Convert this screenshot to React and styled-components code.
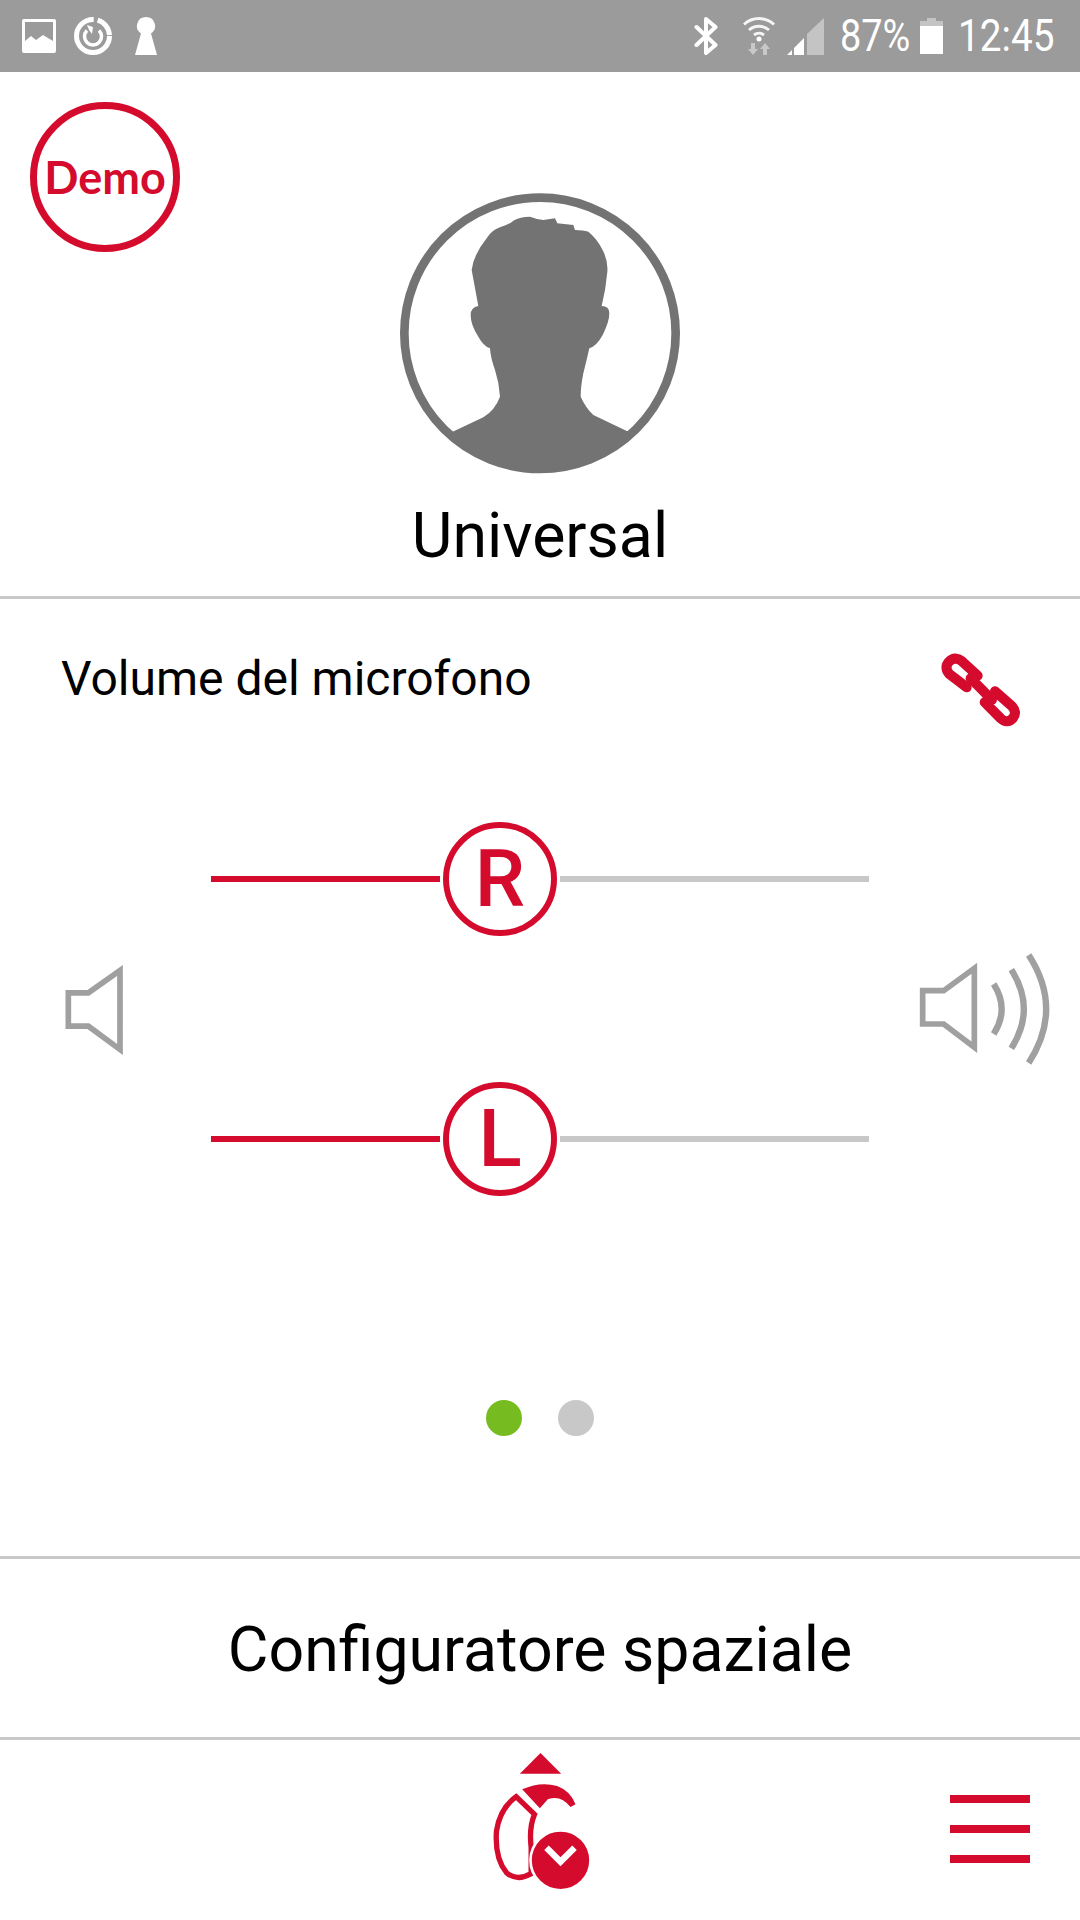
import React from 'react';
import styled, { createGlobalStyle } from 'styled-components';

const RED = '#d50b2d';
const LINE = '#c8c8c8';
const ICON_GREY = '#a0a0a0';

const GlobalStyle = createGlobalStyle`
  html, body {
    margin: 0;
    padding: 0;
    background: #fff;
  }
  body {
    font-family: Roboto, "Liberation Sans", sans-serif;
  }
`;

const Page = styled.div`
  width: 1080px;
  height: 1920px;
  display: flex;
  flex-direction: column;
  background: #fff;
  color: #000;
  overflow: hidden;
`;

const StatusBar = styled.div`
  height: 72px;
  flex: none;
  display: flex;
  align-items: center;
  justify-content: space-between;
  padding: 0 26px 0 22px;
  background: #9b9b9b;
  color: #fff;
`;

const StatusGroup = styled.div`
  display: flex;
  align-items: center;
`;

const StatusIcon = styled.svg`
  display: block;
  flex: none;
  margin-left: ${(p) => p.$gap || 0}px;
`;

const StatusText = styled.span`
  display: inline-block;
  width: ${(p) => p.$width}px;
  margin-left: ${(p) => p.$gap}px;
  font-size: 44px;
  font-weight: 400;
  line-height: 72px;
  white-space: nowrap;
  transform: scaleX(${(p) => p.$squeeze});
  transform-origin: left center;
`;

const Header = styled.header`
  height: 527px;
  flex: none;
  box-sizing: border-box;
  display: grid;
  grid-template-columns: 1fr 290px 1fr;
  padding-top: 30px;
  border-bottom: 3px solid ${LINE};
`;

const DemoBadge = styled.div`
  width: 150px;
  height: 150px;
  box-sizing: border-box;
  margin-left: 30px;
  display: flex;
  align-items: center;
  justify-content: center;
  border: 7px solid ${RED};
  border-radius: 50%;
  color: ${RED};
  font-family: Lato, sans-serif;
  font-size: 45px;
  font-weight: 700;
`;

const Profile = styled.div`
  display: flex;
  flex-direction: column;
  align-items: center;
  padding-top: 86px;
`;

const Avatar = styled.svg`
  display: block;
  flex: none;
`;

const ProfileName = styled.div`
  margin-top: 22px;
  font-size: 62.6px;
  line-height: 72px;
  white-space: nowrap;
`;

const VolumePanel = styled.section`
  flex: 1;
  display: flex;
  flex-direction: column;
`;

const PanelHead = styled.div`
  display: flex;
  align-items: center;
  justify-content: space-between;
  padding: 50px 60px 0 61px;
  height: 80px;
`;

const PanelTitle = styled.h2`
  margin: 0 0 20px;
  font-size: 48px;
  font-weight: 400;
  line-height: 60px;
`;

const SliderArea = styled.div`
  display: grid;
  grid-template-columns: 211px 658px 211px;
  align-items: center;
  margin-top: 93px;
`;

const VolumeIcon = styled.svg`
  display: block;
  margin-left: ${(p) => p.$left}px;
`;

const Sliders = styled.div`
  display: flex;
  flex-direction: column;
  gap: 146px;
`;

const SliderRow = styled.div`
  display: flex;
  align-items: center;
  gap: 3px;
  height: 114px;
`;

const SliderLine = styled.div`
  height: 6px;
  flex: ${(p) => (p.$active ? `0 0 ${p.$size}px` : 1)};
  background: ${(p) => (p.$active ? RED : LINE)};
`;

const Thumb = styled.div`
  width: 114px;
  height: 114px;
  flex: none;
  box-sizing: border-box;
  display: flex;
  align-items: center;
  justify-content: center;
  border: 6px solid ${RED};
  border-radius: 50%;
  color: ${RED};
  font-family: Roboto, sans-serif;
  font-size: 80px;
  font-weight: 500;
`;

const Pager = styled.div`
  display: flex;
  justify-content: center;
  gap: 36px;
  margin-top: 204px;
`;

const PagerDot = styled.span`
  width: 36px;
  height: 36px;
  border-radius: 50%;
  background: ${(p) => (p.$active ? '#76bc21' : LINE)};
`;

const ConfigRow = styled.div`
  height: 184px;
  flex: none;
  box-sizing: border-box;
  display: flex;
  align-items: center;
  justify-content: center;
  padding-top: 2px;
  border-top: 3px solid ${LINE};
  border-bottom: 3px solid ${LINE};
  font-size: 62.6px;
`;

const BottomBar = styled.nav`
  height: 180px;
  flex: none;
  display: grid;
  grid-template-columns: 1fr 107px 1fr;
`;

const HearingIcon = styled.svg`
  display: block;
  grid-column: 2;
  margin-top: 11px;
`;

const MenuButton = styled.div`
  justify-self: end;
  width: 80px;
  margin: 55px 50px 0 0;
  display: flex;
  flex-direction: column;
  gap: 22px;
`;

const MenuBar = styled.span`
  display: block;
  height: 8px;
  background: ${RED};
`;

const ImageIcon = () => (
  <StatusIcon width="34" height="34" viewBox="0 0 34 34">
    <path fill="#fff" fillRule="evenodd" d="M2 0h30a2 2 0 0 1 2 2v30a2 2 0 0 1-2 2H2a2 2 0 0 1-2-2V2a2 2 0 0 1 2-2zM3 3v19l6-5 5 4 7-5 10 6V3z" />
  </StatusIcon>
);

const SyncIcon = () => (
  <StatusIcon $gap={18} width="38" height="38" viewBox="0 0 38 38" fill="none" stroke="#fff">
    <circle cx="19" cy="19" r="16.500" strokeWidth="5" strokeDasharray="78 4 20 2" />
    <path strokeWidth="3.500" d="M13 13.500a8.500 8.500 0 1 0 12 0" />
    <path fill="#fff" stroke="none" d="M13 8l6 2-1 7-3-4z" />
  </StatusIcon>
);

const KeyholeIcon = () => (
  <StatusIcon $gap={23} width="22" height="38" viewBox="0 0 22 38">
    <path fill="#fff" d="M11 0a9 9 0 0 1 5 16.500L22 38H0l6-21.500A9 9 0 0 1 11 0z" />
  </StatusIcon>
);

const BluetoothIcon = () => (
  <StatusIcon width="24" height="38" viewBox="0 0 24 38" fill="none" stroke="#fff" strokeWidth="4" strokeLinecap="round" strokeLinejoin="round">
    <path d="M2.500 10l19 18-9.500 8V2l9.500 8-19 18" />
  </StatusIcon>
);

const WifiIcon = () => (
  <StatusIcon $gap={25} width="32" height="38" viewBox="0 0 32 38" fill="none">
    <path stroke="#fff" strokeOpacity=".9" strokeWidth="3" d="M1 7.500a22 22 0 0 1 30 0" />
    <path stroke="#fff" strokeOpacity=".9" strokeWidth="3" d="M6 13a15 15 0 0 1 20 0" />
    <path stroke="#fff" strokeOpacity=".9" strokeWidth="3" d="M11 18a8 8 0 0 1 10 0" />
    <circle cx="16" cy="22" r="2.500" fill="#fff" />
    <path fill="#c8c8c8" d="M8 26h4v6h3l-5 6-5-6h3zM20 38h4v-6h3l-5-6-5 6h3z" />
  </StatusIcon>
);

const SignalIcon = () => (
  <StatusIcon $gap={12} width="37" height="37" viewBox="0 0 37 37">
    <path fill="#c4c4c4" d="M37 0v37H20V16z" />
    <path fill="#fff" d="M17 20v17H7v-7zM5 32v5H0z" />
  </StatusIcon>
);

const BatteryIcon = () => (
  <StatusIcon $gap={0} width="23" height="36" viewBox="0 0 23 36">
    <path fill="#c4c4c4" d="M7 0h9v3h7v5H0V3h7z" />
    <path fill="#fff" d="M0 8h23v28H0z" />
  </StatusIcon>
);

const LinkIcon = () => (
  <svg width="80" height="80" viewBox="120 90 240 240" fill="none" stroke={RED} strokeWidth="30" strokeLinecap="round">
    <path d="M233 170l-48-44c-15-12-28-8-38 2-10 11-11 24 1 37l52 40" />
    <path d="M212 178l64 64" />
    <path d="M254 250l48 48c13 12 26 11 37-1 9-11 8-24-4-36l-50-44" />
  </svg>
);

const SpeakerShape = ({ d }) => <path d={d} fill="none" stroke={ICON_GREY} strokeWidth="17" strokeLinejoin="miter" />;

const Slider = ({ label, value }) => (
  <SliderRow>
    <SliderLine $active $size={value} />
    <Thumb>{label}</Thumb>
    <SliderLine />
  </SliderRow>
);

const App = () => (
  <Page>
    <GlobalStyle />
    <StatusBar>
      <StatusGroup>
        <ImageIcon />
        <SyncIcon />
        <KeyholeIcon />
      </StatusGroup>
      <StatusGroup>
        <BluetoothIcon />
        <WifiIcon />
        <SignalIcon />
        <StatusText $gap={16} $width={80} $squeeze={0.86}>87%</StatusText>
        <BatteryIcon />
        <StatusText $gap={15} $width={96} $squeeze={0.88}>12:45</StatusText>
      </StatusGroup>
    </StatusBar>

    <Header>
      <DemoBadge>Demo</DemoBadge>
      <Profile>
        <Avatar width="290" height="290" viewBox="45 24 870 870">
          <circle cx="480" cy="460" r="407" fill="none" stroke="#737373" strokeWidth="26" />
          <path
            fill="#737373"
            d="M210 766L218 755L310 712Q345 690 360 650Q358 610 345 570Q332 535 330 505Q310 498 295 470Q272 435 272 405Q272 382 295 378L275 270Q280 225 320 175Q335 150 360 142Q385 135 400 122Q420 110 450 110Q470 118 490 120L525 115L532 130L580 135L585 150Q610 150 625 155Q650 175 665 205Q685 240 682 275Q678 325 665 378Q688 378 688 400Q688 425 668 465Q650 498 628 505Q620 540 610 580Q602 620 602 650Q618 685 640 705L745 755L750 766A408 408 0 0 1 210 766Z"
          />
        </Avatar>
        <ProfileName>Universal</ProfileName>
      </Profile>
    </Header>

    <VolumePanel>
      <PanelHead>
        <PanelTitle>Volume del microfono</PanelTitle>
        <LinkIcon />
      </PanelHead>

      <SliderArea>
        <VolumeIcon $left={60} width="70" height="97" viewBox="60 90 210 290">
          <SpeakerShape d="M85 185H145L240 118V355L145 285H85Z" />
        </VolumeIcon>
        <Sliders>
          <Slider label="R" value={229} />
          <Slider label="L" value={229} />
        </Sliders>
        <VolumeIcon $left={48} width="140" height="120" viewBox="80 60 420 360">
          <SpeakerShape d="M97 185H160L252 118V355L160 285H97Z" />
          <g fill="none" stroke={ICON_GREY} strokeWidth="19">
            <path d="M310 165Q358 240 310 315" />
            <path d="M363 122Q438 240 363 358" />
            <path d="M415 78Q520 240 415 402" />
          </g>
        </VolumeIcon>
      </SliderArea>

      <Pager>
        <PagerDot $active />
        <PagerDot />
      </Pager>
    </VolumePanel>

    <ConfigRow>Configuratore spaziale</ConfigRow>

    <BottomBar>
      <HearingIcon width="107" height="140" viewBox="50 60 320 420">
        <path fill={RED} d="M148 128L210 66L272 128Z" />
        <path fill={RED} d="M155 175Q210 150 260 165Q300 180 315 220L300 228Q270 190 232 205L208 232Z" />
        <path fill="none" stroke={RED} strokeWidth="16" d="M137 197L192 250Q175 290 182 350V428Q140 452 108 425Q72 380 78 300Q88 232 137 197Z" />
        <circle cx="270" cy="388" r="90" fill={RED} stroke="#fff" strokeWidth="8" />
        <path fill="none" stroke="#fff" strokeWidth="19" d="M228 350L270 392L312 350" />
      </HearingIcon>
      <MenuButton>
        <MenuBar />
        <MenuBar />
        <MenuBar />
      </MenuButton>
    </BottomBar>
  </Page>
);

export default App;
